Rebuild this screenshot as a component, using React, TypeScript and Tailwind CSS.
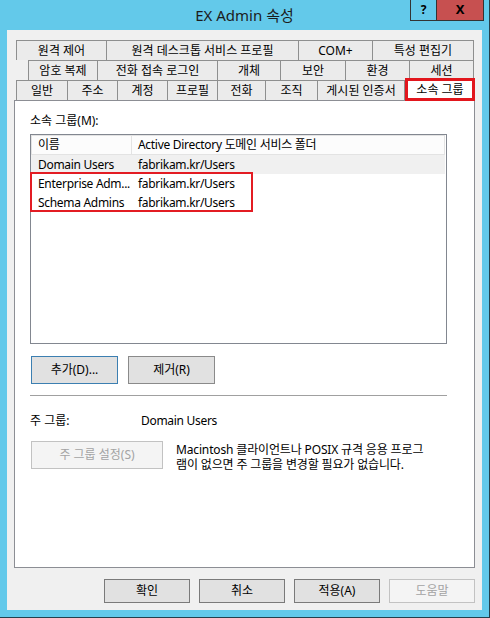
import React from "react";

const tabBase =
  "h-full flex items-center justify-center border-t border-l border-[#8e8f8f] bg-[#ebebeb] text-[12px] leading-none whitespace-nowrap";

function Btn({
  label,
  className,
}: {
  label: string;
  className: string;
}) {
  return (
    <div
      className={
        "flex items-center justify-center text-[12px] leading-none whitespace-nowrap " +
        className
      }
    >
      {label}
    </div>
  );
}

export default function App() {
  return (
    <div className="relative w-[490px] h-[618px] bg-[#63c9ea] border-r border-b border-[#24404c] font-['Noto_Sans','Noto_Sans_CJK_KR',sans-serif] text-[12px] text-black">
      {/* title bar */}
      <div className="h-[30px] flex items-center justify-center">
        <span className="text-[15px] text-[#1c1c1c] pt-[1px]">EX Admin 속성</span>
      </div>
      <div className="absolute top-0 right-[5px] flex h-[21px] border border-t-0 border-[#333333]">
        <div className="w-[26px] h-full flex items-center justify-center border-r border-[#333333] text-[12px] font-bold text-black">
          ?
        </div>
        <div className="w-[46px] h-full flex items-center justify-center bg-[#c75050] text-[13px] font-bold text-black">
          X
        </div>
      </div>

      {/* client */}
      <div className="ml-[7px] w-[475px] h-[580px] bg-[#f0f0f0] flex flex-col">
        {/* tabs */}
        <div className="mt-[10px] flex flex-col">
          <div className="flex h-[20px] ml-[9px]">
            <div className={tabBase + " w-[90px]"}>원격 제어</div>
            <div className={tabBase + " w-[192px]"}>원격 데스크톱 서비스 프로필</div>
            <div className={tabBase + " w-[74px]"}>COM+</div>
            <div className={tabBase + " w-[102px] border-r"}>특성 편집기</div>
          </div>
          <div className="flex h-[20px] ml-[21px]">
            <div className={tabBase + " w-[69px]"}>암호 복제</div>
            <div className={tabBase + " w-[120px]"}>전화 접속 로그인</div>
            <div className={tabBase + " w-[63px]"}>개체</div>
            <div className={tabBase + " w-[65px]"}>보안</div>
            <div className={tabBase + " w-[64px]"}>환경</div>
            <div className={tabBase + " w-[65px] border-r"}>세션</div>
          </div>
          <div className="flex items-end h-[20px] ml-[9px]">
            <div className={tabBase + " w-[51px]"}>일반</div>
            <div className={tabBase + " w-[50px]"}>주소</div>
            <div className={tabBase + " w-[50px]"}>계정</div>
            <div className={tabBase + " w-[50px]"}>프로필</div>
            <div className={tabBase + " w-[48px]"}>전화</div>
            <div className={tabBase + " w-[52px]"}>조직</div>
            <div className={tabBase + " w-[88px] border-r"}>게시된 인증서</div>
            <div className="relative z-10 w-[70px] h-[23px] mb-[-1px] bg-white border-[3px] border-[#e2161d] flex items-center justify-center text-[12px] leading-none whitespace-nowrap">
              소속 그룹
            </div>
          </div>
        </div>

        {/* panel */}
        <div className="ml-[7px] w-[461px] h-[468px] border border-[#8c8e94] bg-white flex flex-col pl-[15px]">
          <div className="mt-[12px] h-[16px] leading-[16px]">소속 그룹(M):</div>

          <div className="relative mt-[5px] w-[417px] h-[210px] border border-[#828790] bg-white flex flex-col tracking-[-0.3px]">
            <div className="flex h-[20px] w-[414px] border border-[#e3e3e3] bg-[#fcfcfc]">
              <div className="w-[100px] h-full border-r border-[#e3e3e3] flex items-center pl-[6px]">
                이름
              </div>
              <div className="flex-1 h-full flex items-center pl-[6px]">
                Active Directory 도메인 서비스 폴더
              </div>
            </div>
            <div className="flex h-[19px] w-[414px] bg-[#f0f0f0] items-center">
              <div className="w-[107px] pl-[7px] whitespace-nowrap">Domain Users</div>
              <div>fabrikam.kr/Users</div>
            </div>
            <div className="flex h-[19px] w-[414px] items-center">
              <div className="w-[107px] pl-[7px] whitespace-nowrap">Enterprise Adm...</div>
              <div>fabrikam.kr/Users</div>
            </div>
            <div className="flex h-[19px] w-[414px] items-center">
              <div className="w-[107px] pl-[7px] whitespace-nowrap">Schema Admins</div>
              <div>fabrikam.kr/Users</div>
            </div>
            <div className="absolute left-[-1px] top-[37px] w-[223px] h-[40px] border-2 border-[#e31c23]" />
          </div>

          <div className="mt-[12px] ml-[1px] flex gap-[10px]">
            <Btn
              label="추가(D)..."
              className="w-[87px] h-[28px] bg-[#e1e1e1] border border-[#3c7fb1]"
            />
            <Btn
              label="제거(R)"
              className="w-[87px] h-[28px] bg-[#e1e1e1] border border-[#8a8a8a]"
            />
          </div>

          <div className="mt-[11px] w-[417px] h-px bg-[#a0a0a0]" />

          <div className="mt-[17px] flex h-[16px] leading-[16px]">
            <div className="w-[111px]">주 그룹:</div>
            <div className="tracking-[-0.3px]">Domain Users</div>
          </div>

          <div className="mt-[12px] ml-[1px] flex items-start gap-[13px]">
            <Btn
              label="주 그룹 설정(S)"
              className="w-[132px] h-[28px] bg-[#f4f4f4] border border-[#c2c2c2] text-[#a3a3a3]"
            />
            <div className="mt-[1px] flex flex-col whitespace-nowrap tracking-[-0.15px]">
              <div className="h-[15px] leading-[15px]">Macintosh 클라이언트나 POSIX 규격 응용 프로그</div>
              <div className="h-[15px] leading-[15px]">램이 없으면 주 그룹을 변경할 필요가 없습니다.</div>
            </div>
          </div>
        </div>

        {/* bottom buttons */}
        <div className="mt-[11px] flex justify-end gap-[9px] pr-[7px]">
          <Btn label="확인" className="w-[86px] h-[24px] bg-[#e1e1e1] border border-[#7a7a7a]" />
          <Btn label="취소" className="w-[86px] h-[24px] bg-[#e1e1e1] border border-[#7a7a7a]" />
          <Btn label="적용(A)" className="w-[86px] h-[24px] bg-[#e1e1e1] border border-[#7a7a7a]" />
          <Btn
            label="도움말"
            className="w-[86px] h-[24px] bg-[#f4f4f4] border border-[#c2c2c2] text-[#a3a3a3]"
          />
        </div>
      </div>
    </div>
  );
}
